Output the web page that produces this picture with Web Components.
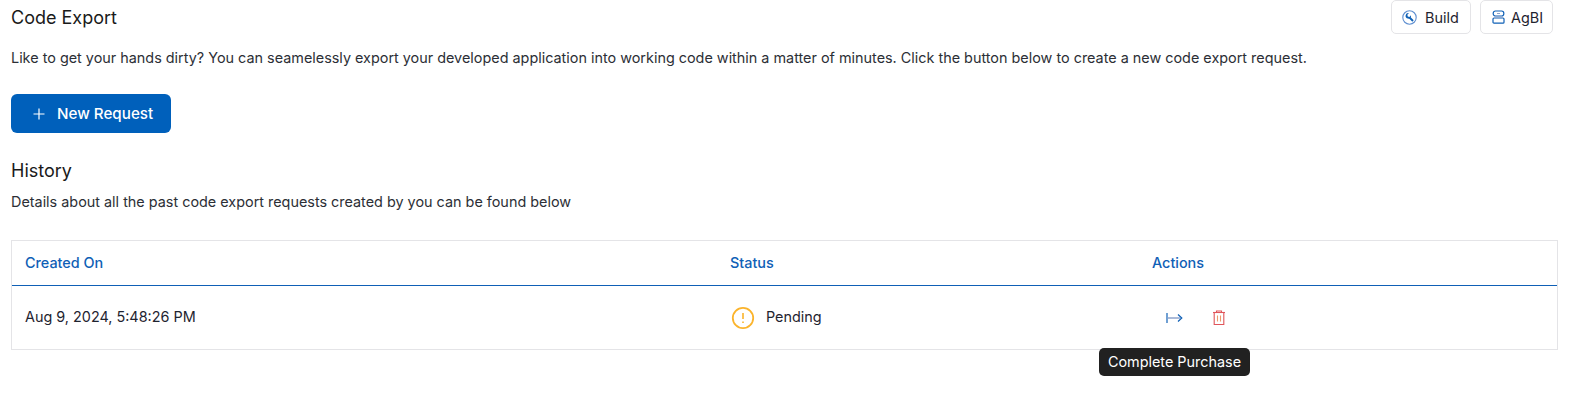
<!DOCTYPE html>
<html>
<head>
<meta charset="utf-8">
<title>Code Export</title>
<style>
  html, body { margin: 0; background: #fff; }
  body { font-family: Inter, "Liberation Sans", sans-serif; color: #1a1a1a; }
</style>
</head>
<body>
<export-page></export-page>
<script>
class TagButton extends HTMLElement {
  constructor() {
    super();
    this.attachShadow({ mode: 'open' }).innerHTML = `
      <style>
        :host { display: inline-flex; align-items: center; box-sizing: border-box;
          height: 34px; border: 1px solid #e4e4e7; border-radius: 5px; font-size: 14.4px; color: #1f2430; background: #fff; }
        ::slotted(svg) { display: block; }
      </style>
      <slot name="icon"></slot><slot></slot>`;
  }
}

class PrimaryButton extends HTMLElement {
  constructor() {
    super();
    this.attachShadow({ mode: 'open' }).innerHTML = `
      <style>
        :host { display: inline-flex; align-items: center; box-sizing: border-box; width: 160px; height: 39px;
          padding-left: 21px; gap: 11px; background: #0060bb; color: #fff; border-radius: 6px; font-size: 15.2px; font-weight: 500; }
        svg { display: block; }
      </style>
      <svg width="14" height="14" viewBox="0 0 14 14" fill="none" stroke="#fff" stroke-width="1.2"><path d="M7 1.5v11M1.5 7h11"/></svg>
      <slot></slot>`;
  }
}

class ExportTable extends HTMLElement {
  constructor() {
    super();
    this.attachShadow({ mode: 'open' }).innerHTML = `
      <style>
        :host { display: block; box-sizing: border-box; border: 1px solid #e4e4e7; height: 110px; font-size: 14.4px; position: relative; }
        .row { display: grid; grid-template-columns: 705px 422px 1fr; align-items: center; padding-left: 13px; }
        .head { height: 42px; padding-bottom: 2px; border-bottom: 1px solid #0f60b6; color: #0f60b6; font-weight: 500; }
        .body { height: 63px; color: #1f2430; }
        .body .text { margin-bottom: 2px; }
        .status, .actions { display: flex; align-items: center; }
        .status { gap: 11px; padding-left: 1px; }
        .actions { gap: 30px; padding-left: 14px; }
        svg { display: block; }
      </style>
      <div class="row head"><div>Created On</div><div>Status</div><div>Actions</div></div>
      <div class="row body">
        <div class="text">Aug 9, 2024, 5:48:26 PM</div>
        <div class="status">
          <svg width="24" height="24" viewBox="0 0 24 24" fill="none" stroke="#fbb42c"><circle cx="12" cy="12" r="10.2" stroke-width="1.8"/><path d="M12 7v6M12 15.4v1.7" stroke-width="1.6"/></svg>
          <span class="text">Pending</span>
        </div>
        <div class="actions">
          <svg width="17" height="12" viewBox="0 0 17 12" fill="none" stroke="#0f60b6" stroke-width="1.2"><path d="M1 1v10"/><path d="M1.5 6h13" stroke="#8ea3cc" stroke-width="1.5"/><path d="M12 2.5l3.8 3.5-3.8 3.5"/></svg>
          <svg width="12" height="15" viewBox="0 0 12 15" fill="none" stroke="#e0555a" stroke-width="1.1"><path d="M0 2.5h12"/><path d="M3.5 2.5V1h5v1.5"/><path d="M1.2 2.5v12h9.6v-12"/><path d="M4.5 5.5v6M7.5 5.5v6" stroke="#ee9a6a"/></svg>
        </div>
      </div>
      <slot></slot>`;
  }
}

class TipBox extends HTMLElement {
  constructor() {
    super();
    this.attachShadow({ mode: 'open' }).innerHTML = `
      <style>
        :host { position: absolute; left: 1087px; top: 107px; box-sizing: border-box; display: flex; align-items: center; justify-content: center;
          width: 151px; height: 28px; padding-bottom: 1px; background: #212121; color: #fff; border-radius: 5px; font-size: 14.4px; white-space: nowrap; }
      </style>
      <slot></slot>`;
  }
}

class ExportPage extends HTMLElement {
  constructor() {
    super();
    this.attachShadow({ mode: 'open' }).innerHTML = `
      <style>
        :host { display: block; padding: 0 12px 0 11px; height: 407px; box-sizing: border-box; position: relative; }
        header { display: flex; justify-content: space-between; align-items: flex-start; height: 34px; }
        h1, h2 { margin: 0; font-weight: 400; font-size: 18px; line-height: 20px; color: #1a1a1a; }
        h1 { padding-top: 8px; }
        .tags { display: flex; gap: 9px; margin-right: 5px; }
        p { margin: 0; font-size: 14.4px; line-height: 20px; color: #2c2f36; }
        .intro { margin-top: 14px; }
        .cta { margin-top: 26px; height: 39px; }
        h2 { margin-top: 28px; }
        .sub { margin-top: 11px; }
        export-table { margin-top: 28px; }
      </style>
      <header>
        <h1>Code Export</h1>
        <div class="tags">
          <tag-button style="width:80px;padding-left:10px;gap:8px">
            <svg slot="icon" width="15" height="15" viewBox="0 0 15 15" fill="none"><circle cx="7.5" cy="7.5" r="6.7" stroke="#5f8fd0" stroke-width="1.1"/><path d="M7.5 7.5L11 11" stroke="#0f60b6" stroke-width="2"/><path d="M3.600 5.600A2.700 2.700 0 0 1 6.900 3.200L5.300 4.800l.5 1.600 1.600.5 1.600-1.600A2.700 2.700 0 0 1 6 8.600 2.700 2.700 0 0 1 3.600 5.600z" fill="#0f60b6"/></svg>
            Build
          </tag-button>
          <tag-button style="width:73px;padding-left:11px;gap:6px">
            <svg slot="icon" width="13" height="14" viewBox="0 0 13 14" fill="none" stroke="#0f60b6" stroke-width="1.2"><rect x="1.2" y="1" width="10.600" height="5" rx="2.200"/><rect x="1" y="8" width="11" height="5.200" rx="1"/><path d="M2 7h9M5 3.500h3" stroke="#8ea3cc"/></svg>
            AgBI
          </tag-button>
        </div>
      </header>
      <p class="intro">Like to get your hands dirty? You can seamelessly export your developed application into working code within a matter of minutes. Click the button below to create a new code export request.</p>
      <div class="cta"><primary-button>New Request</primary-button></div>
      <h2>History</h2>
      <p class="sub">Details about all the past code export requests created by you can be found below</p>
      <export-table><tip-box>Complete Purchase</tip-box></export-table>`;
  }
}

customElements.define('tag-button', TagButton);
customElements.define('primary-button', PrimaryButton);
customElements.define('export-table', ExportTable);
customElements.define('tip-box', TipBox);
customElements.define('export-page', ExportPage);
</script>
</body>
</html>
